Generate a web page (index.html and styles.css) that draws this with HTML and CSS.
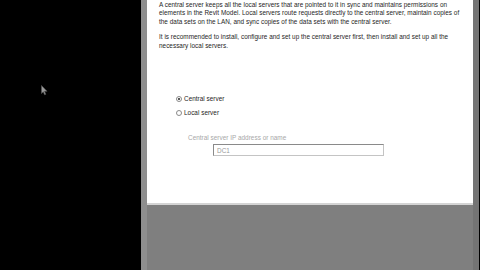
FILE: index.html
```html
<!DOCTYPE html>
<html>
<head>
<meta charset="utf-8">
<link rel="stylesheet" href="styles.css">
</head>
<body>
<div class="screen">
  <div class="desktop">
    <svg class="cursor" width="7" height="11" viewBox="0 0 7 11"><path d="M0.5 0.5 L0.5 8.5 L2.3 6.8 L3.6 9.8 L4.8 9.3 L3.5 6.3 L6 6.3 Z" fill="#9a9a9a" stroke="#555" stroke-width="0.6"/></svg>
  </div>
  <div class="window">
    <div class="panel">
      <p class="para">A central server keeps all the local servers that are pointed to it in sync and maintains permissions on<br>elements in the Revit Model. Local servers route requests directly to the central server, maintain copies of<br>the data sets on the LAN, and sync copies of the data sets with the central server.</p>
      <p class="para">It is recommended to install, configure and set up the central server first, then install and set up all the<br>necessary local servers.</p>
      <div class="options">
        <label class="opt"><span class="radio checked"></span>Central server</label>
        <label class="opt"><span class="radio"></span>Local server</label>
      </div>
      <div class="field">
        <div class="field-label">Central server IP address or name</div>
        <div class="input">DC1</div>
      </div>
    </div>
    <div class="panel-edge"></div>
    <div class="lower"></div>
  </div>
  <div class="edge"></div>
</div>
</body>
</html>
```
FILE: styles.css
```css
* { box-sizing: border-box; }
html, body { margin: 0; padding: 0; background: #000; }
.screen { display: flex; width: 480px; height: 270px; background: #000; overflow: hidden; }
.desktop { width: 141px; position: relative; }
.cursor { position: absolute; left: 41px; top: 85px; }
.window {
  width: 338px;
  display: flex; flex-direction: column;
  background: #7f7f7f;
  border-left: 6px solid #8e8e8e;
  box-shadow: inset 3px 0 0 #a4a4a4;
  border-right: 6px solid #747474;
}
.panel {
  height: 203px;
  background: #fff;
  padding: 0 0 0 12px;
  font-family: "Liberation Sans", Arial, sans-serif;
  font-size: 6.4px;
  letter-spacing: 0.02px;
  line-height: 8.3px;
  color: #262626;
  white-space: nowrap;
}
.para { margin: 1px 0 7.5px; }
.options { margin-top: 45px; display: flex; flex-direction: column; gap: 6px; padding-left: 17px; }
.opt { display: flex; align-items: center; gap: 2px; }
.radio { width: 6px; height: 6px; border-radius: 50%; border: 1px solid #8a8a8a; background: #fff; position: relative; }
.radio.checked::after { content: ""; position: absolute; left: 1px; top: 1px; width: 2px; height: 2px; border-radius: 50%; background: #222; }
.field { margin-top: 16px; padding-left: 29px; color: #a8a8a8; }
.field-label { margin-bottom: 2px; }
.input {
  margin-left: 25px;
  width: 171px; height: 12px;
  border: 1px solid #c4c4c4;
  border-top-color: #8a8a8a; border-left-color: #8a8a8a;
  padding: 1px 3px;
  line-height: 9px;
  color: #9a9a9a;
}
.panel-edge { height: 2px; background: #d4d4d4; }
.lower { flex: 1; background: #7f7f7f; }
.edge { flex: 1; background: #000; }
```
